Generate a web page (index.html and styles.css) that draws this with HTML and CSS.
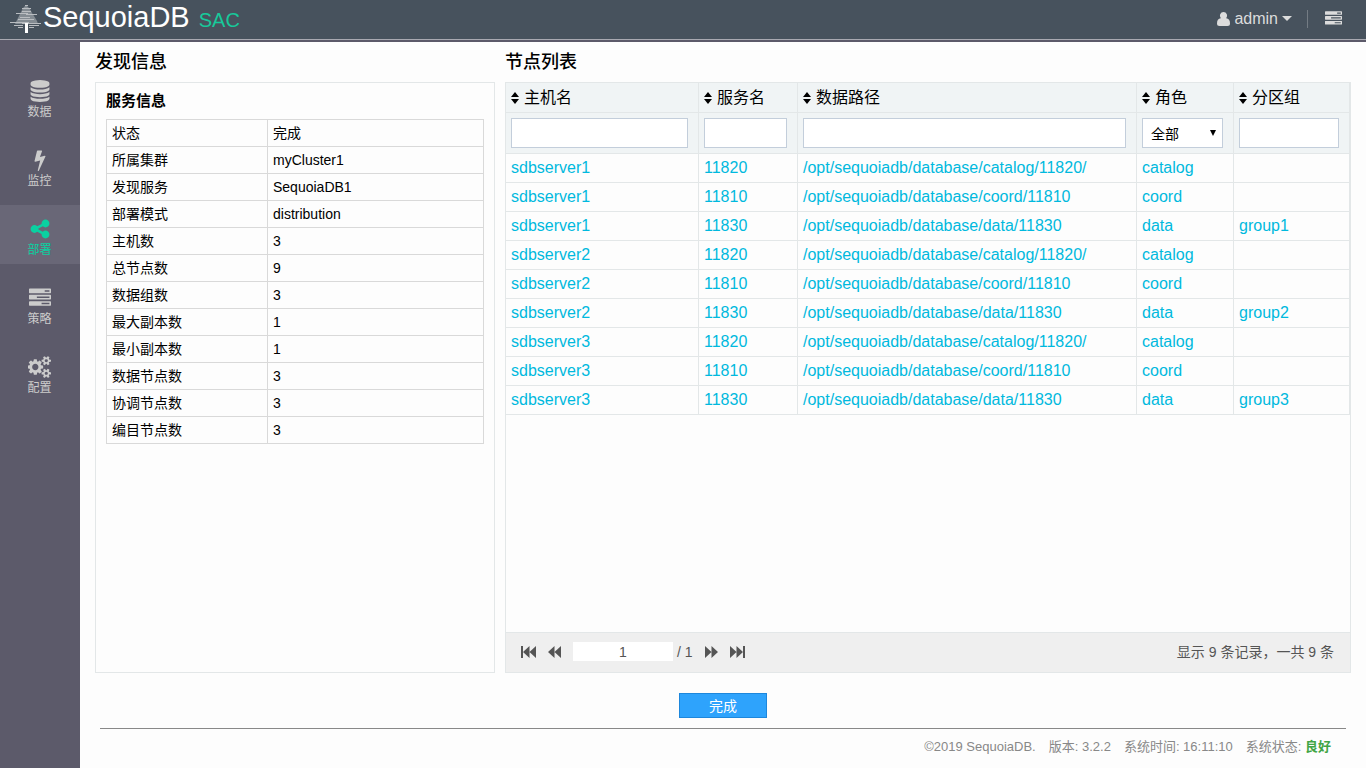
FILE: index.html
```html
<!DOCTYPE html>
<html lang="zh-CN">
<head>
<meta charset="utf-8">
<title>SequoiaDB SAC</title>
<link rel="stylesheet" href="styles.css">
</head>
<body>
<svg class="defs" aria-hidden="true">
  <symbol id="i-tasks" viewBox="0 0 1792 1792"><path d="M1024 1408h640v-128h-640v128zm-384-512h1024v-128h-1024v128zm640-512h384v-128h-384v128zm512 832v256q0 26-19 45t-45 19h-1664q-26 0-45-19t-19-45v-256q0-26 19-45t45-19h1664q26 0 45 19t19 45zm0-512v256q0 26-19 45t-45 19h-1664q-26 0-45-19t-19-45v-256q0-26 19-45t45-19h1664q26 0 45 19t19 45zm0-512v256q0 26-19 45t-45 19h-1664q-26 0-45-19t-19-45v-256q0-26 19-45t45-19h1664q26 0 45 19t19 45z"/></symbol>
  <symbol id="i-sort" viewBox="0 0 8 12"><path d="M4 0L8 5H0zM4 12L0 7H8z"/></symbol>
  <symbol id="i-double" viewBox="0 0 13 12"><path d="M6.500 0v12L0 6zM13 0v12L6.500 6z"/></symbol>
  <symbol id="i-end" viewBox="0 0 15 12"><path d="M0 0h2v12H0zM8.500 0v12L2 6zM15 0v12L8.500 6z"/></symbol>
</svg>

<header class="topbar">
  <a class="brand" href="#">
    <svg class="brand-tree" viewBox="0 0 32 30" aria-hidden="true">
      <path class="crown" d="M16 1L20 5L22 9L24 12L27 17L28 20H5L7 16L9 12L11 8L13 4z"/>
      <path class="boughs" d="M15 1.500h3M12 4.500h9M12 7.500h9M6 9.500h12M16 10.500h11M10 13.500h10M8 15.500h16M0 18.500h19M12 19.500h19M4 21.500h9M19 21.500h10M8 23.500h5M19 23.500h5"/>
      <path class="trunk" d="M15 19h3v10h-3z"/>
    </svg>
    <span class="brand-name">SequoiaDB</span>
    <span class="brand-sub">SAC</span>
  </a>
  <div class="tools">
    <button class="tool user" type="button">
      <svg width="13" height="14" viewBox="0 0 13 14" aria-hidden="true"><path d="M6.500 0a3.800 3.800 0 0 1 2.700 6.300Q13 6.500 13 11.500Q13 14 10.500 14h-8Q0 14 0 11.500Q0 6.500 3.800 6.300A3.800 3.800 0 0 1 6.500 0z"/></svg>
      <span>admin</span>
      <svg width="10" height="5" viewBox="0 0 10 5" aria-hidden="true"><path d="M0 0h10L5 5z"/></svg>
    </button>
    <button class="tool menu" type="button" aria-label="任务">
      <svg width="17" height="17" aria-hidden="true"><use href="#i-tasks"/></svg>
    </button>
  </div>
</header>

<div class="shell">
  <nav class="sidebar">
    <a class="nav-item" href="#">
      <svg class="nav-icon" viewBox="0 0 1792 1792" aria-hidden="true"><path d="M896 768q237 0 443-43t325-127v170q0 69-103 128t-280 93.500-385 34.500-385-34.500-280-93.500-103-128v-170q119 84 325 127t443 43zm0 768q237 0 443-43t325-127v170q0 69-103 128t-280 93.500-385 34.500-385-34.500-280-93.500-103-128v-170q119 84 325 127t443 43zm0-384q237 0 443-43t325-127v170q0 69-103 128t-280 93.500-385 34.500-385-34.500-280-93.500-103-128v-170q119 84 325 127t443 43zm0-1152q208 0 385 34.500t280 93.500 103 128v128q0 69-103 128t-280 93.500-385 34.500-385-34.500-280-93.500-103-128v-128q0-69 103-128t280-93.500 385-34.500z"/></svg>
      <span>数据</span>
    </a>
    <a class="nav-item" href="#">
      <svg class="nav-icon" viewBox="0 0 1792 1792" aria-hidden="true"><path d="M1333 566q18 20 7 44l-540 1157q-13 25-42 25-4 0-14-2-17-5-25.500-19t-4.500-30l197-808-406 101q-4 1-12 1-18 0-31-11-18-15-13-39l201-825q4-14 16-23t28-9h328q19 0 32 12.500t13 29.500q0 8-5 18l-171 463 396-98q8-2 12-2 19 0 34 15z"/></svg>
      <span>监控</span>
    </a>
    <a class="nav-item active" href="#" aria-current="page">
      <svg class="nav-icon" viewBox="0 0 1792 1792" aria-hidden="true"><path d="M1344 1024q133 0 226.500 93.500t93.500 226.500-93.500 226.500-226.500 93.500-226.500-93.500-93.500-226.500q0-12 2-34l-360-180q-92 86-218 86-133 0-226.500-93.500t-93.500-226.500 93.500-226.500 226.500-93.500q126 0 218 86l360-180q-2-22-2-34 0-133 93.500-226.500t226.500-93.500 226.500 93.500 93.500 226.500-93.500 226.500-226.500 93.500q-126 0-218-86l-360 180q2 22 2 34t-2 34l360 180q92-86 218-86z"/></svg>
      <span>部署</span>
    </a>
    <a class="nav-item" href="#">
      <svg class="nav-icon" aria-hidden="true"><use href="#i-tasks"/></svg>
      <span>策略</span>
    </a>
    <a class="nav-item" href="#">
      <svg class="nav-icon wide" viewBox="0 0 1920 1792" aria-hidden="true"><path d="M832 896q0-106-75-181t-181-75-181 75-75 181 75 181 181 75 181-75 75-181zm768 512q0-52-38-90t-90-38-90 38-38 90q0 53 37.500 90.500t90.500 37.500 90.500-37.500 37.500-90.500zm0-1024q0-52-38-90t-90-38-90 38-38 90q0 53 37.500 90.500t90.500 37.500 90.500-37.500 37.500-90.500zm-384 421v185q0 10-7 19.500t-16 10.500l-155 24q-11 35-32 76 34 48 90 115 7 11 7 20 0 12-7 19-23 30-82.500 89.500t-78.500 59.500q-11 0-21-7l-115-90q-37 19-77 31-11 108-23 155-7 24-30 24h-186q-11 0-20-7.500t-10-17.500l-23-153q-34-10-75-31l-118 89q-7 7-20 7-11 0-21-8-144-133-144-160 0-9 7-19 10-14 41-53t47-61q-23-44-35-82l-152-24q-10-1-17-9.500t-7-19.500v-185q0-10 7-19.500t16-10.500l155-24q11-35 32-76-34-48-90-115-7-11-7-20 0-12 7-20 22-30 82-89t79-59q11 0 21 7l115 90q34-18 77-32 11-108 23-154 7-24 30-24h186q11 0 20 7.500t10 17.500l23 153q34 10 75 31l118-89q8-7 20-7 11 0 21 8 144 133 144 160 0 8-7 19-12 16-42 54t-45 60q23 48 34 82l152 23q10 2 17 10.500t7 19.500zm640 533v140q0 16-149 31-12 27-30 52 51 113 51 138 0 4-4 7-122 71-124 71-8 0-46-47t-52-68q-20 2-30 2t-30-2q-14 21-52 68t-46 47q-2 0-124-71-4-3-4-7 0-25 51-138-18-25-30-52-149-15-149-31v-140q0-16 149-31 13-29 30-52-51-113-51-138 0-4 4-7 4-2 35-20t59-34 30-16q8 0 46 46.500t52 67.500q20-2 30-2t30 2q51-71 92-112l6-2q4 0 124 70 4 3 4 7 0 25-51 138 17 23 30 52 149 15 149 31zm0-1024v140q0 16-149 31-12 27-30 52 51 113 51 138 0 4-4 7-122 71-124 71-8 0-46-47t-52-68q-20 2-30 2t-30-2q-14 21-52 68t-46 47q-2 0-124-71-4-3-4-7 0-25 51-138-18-25-30-52-149-15-149-31v-140q0-16 149-31 13-29 30-52-51-113-51-138 0-4 4-7 4-2 35-20t59-34 30-16q8 0 46 46.500t52 67.500q20-2 30-2t30 2q51-71 92-112l6-2q4 0 124 70 4 3 4 7 0 25-51 138 17 23 30 52 149 15 149 31z"/></svg>
      <span>配置</span>
    </a>
  </nav>

  <main class="main">
    <div class="columns">
      <section class="column">
        <h1 class="title">发现信息</h1>
        <div class="panel info">
          <h2 class="subtitle">服务信息</h2>
          <table class="info-table">
            <tbody>
              <tr><th scope="row">状态</th><td>完成</td></tr>
              <tr><th scope="row">所属集群</th><td>myCluster1</td></tr>
              <tr><th scope="row">发现服务</th><td>SequoiaDB1</td></tr>
              <tr><th scope="row">部署模式</th><td>distribution</td></tr>
              <tr><th scope="row">主机数</th><td>3</td></tr>
              <tr><th scope="row">总节点数</th><td>9</td></tr>
              <tr><th scope="row">数据组数</th><td>3</td></tr>
              <tr><th scope="row">最大副本数</th><td>1</td></tr>
              <tr><th scope="row">最小副本数</th><td>1</td></tr>
              <tr><th scope="row">数据节点数</th><td>3</td></tr>
              <tr><th scope="row">协调节点数</th><td>3</td></tr>
              <tr><th scope="row">编目节点数</th><td>3</td></tr>
            </tbody>
          </table>
        </div>
      </section>

      <section class="column">
        <h1 class="title">节点列表</h1>
        <div class="panel nodes">
          <table class="node-table">
            <colgroup><col class="c-host"><col class="c-service"><col><col class="c-role"><col class="c-group"></colgroup>
            <thead>
              <tr class="heads">
                <th scope="col"><button type="button" class="sort"><svg width="8" height="12" aria-hidden="true"><use href="#i-sort"/></svg>主机名</button></th>
                <th scope="col"><button type="button" class="sort"><svg width="8" height="12" aria-hidden="true"><use href="#i-sort"/></svg>服务名</button></th>
                <th scope="col"><button type="button" class="sort"><svg width="8" height="12" aria-hidden="true"><use href="#i-sort"/></svg>数据路径</button></th>
                <th scope="col"><button type="button" class="sort"><svg width="8" height="12" aria-hidden="true"><use href="#i-sort"/></svg>角色</button></th>
                <th scope="col"><button type="button" class="sort"><svg width="8" height="12" aria-hidden="true"><use href="#i-sort"/></svg>分区组</button></th>
              </tr>
              <tr class="filters">
                <td><input class="field" type="text" aria-label="主机名"></td>
                <td><input class="field" type="text" aria-label="服务名"></td>
                <td><input class="field" type="text" aria-label="数据路径"></td>
                <td><div class="select"><select class="field" aria-label="角色"><option>全部</option><option>catalog</option><option>coord</option><option>data</option></select></div></td>
                <td><input class="field" type="text" aria-label="分区组"></td>
              </tr>
            </thead>
            <tbody>
              <tr><td>sdbserver1</td><td>11820</td><td>/opt/sequoiadb/database/catalog/11820/</td><td>catalog</td><td></td></tr>
              <tr><td>sdbserver1</td><td>11810</td><td>/opt/sequoiadb/database/coord/11810</td><td>coord</td><td></td></tr>
              <tr><td>sdbserver1</td><td>11830</td><td>/opt/sequoiadb/database/data/11830</td><td>data</td><td>group1</td></tr>
              <tr><td>sdbserver2</td><td>11820</td><td>/opt/sequoiadb/database/catalog/11820/</td><td>catalog</td><td></td></tr>
              <tr><td>sdbserver2</td><td>11810</td><td>/opt/sequoiadb/database/coord/11810</td><td>coord</td><td></td></tr>
              <tr><td>sdbserver2</td><td>11830</td><td>/opt/sequoiadb/database/data/11830</td><td>data</td><td>group2</td></tr>
              <tr><td>sdbserver3</td><td>11820</td><td>/opt/sequoiadb/database/catalog/11820/</td><td>catalog</td><td></td></tr>
              <tr><td>sdbserver3</td><td>11810</td><td>/opt/sequoiadb/database/coord/11810</td><td>coord</td><td></td></tr>
              <tr><td>sdbserver3</td><td>11830</td><td>/opt/sequoiadb/database/data/11830</td><td>data</td><td>group3</td></tr>
            </tbody>
          </table>
          <div class="pager">
            <button type="button" class="page-btn" aria-label="首页"><svg width="15" height="12" aria-hidden="true"><use href="#i-end"/></svg></button>
            <button type="button" class="page-btn" aria-label="上一页"><svg width="13" height="12" aria-hidden="true"><use href="#i-double"/></svg></button>
            <div class="page-pos"><input class="page-input" type="text" value="1" aria-label="页码"><span>/ 1</span></div>
            <button type="button" class="page-btn flip" aria-label="下一页"><svg width="13" height="12" aria-hidden="true"><use href="#i-double"/></svg></button>
            <button type="button" class="page-btn flip" aria-label="末页"><svg width="15" height="12" aria-hidden="true"><use href="#i-end"/></svg></button>
            <span class="page-total">显示 9 条记录，一共 9 条</span>
          </div>
        </div>
      </section>
    </div>

    <div class="actions"><button type="button" class="primary">完成</button></div>

    <footer class="footer">
      <span>©2019 SequoiaDB.</span>
      <span>版本: 3.2.2</span>
      <span>系统时间: 16:11:10</span>
      <span>系统状态: <strong class="ok">良好</strong></span>
    </footer>
  </main>
</div>
</body>
</html>
```

FILE: styles.css
```css
*, *::before, *::after { box-sizing: border-box; }

body {
  margin: 0;
  min-height: 100vh;
  display: flex;
  flex-direction: column;
  background: #fdfdfd;
  color: #000;
  font: 14px/20px "Liberation Sans", Arial, "Noto Sans CJK SC", sans-serif;
}

button, input, select { font: inherit; color: inherit; margin: 0; }
button { border: 0; padding: 0; background: none; cursor: pointer; }
svg { display: block; fill: currentColor; }
.defs { position: absolute; width: 0; height: 0; }

/* Top bar */
.topbar {
  display: flex;
  justify-content: space-between;
  height: 40px;
  padding: 0 24px 0 10px;
  background: #47525d;
  border-bottom: 1px solid #a9a9b1;
}
.brand {
  display: flex;
  align-items: baseline;
  color: #fff;
  text-decoration: none;
}
.brand-tree { width: 32px; height: 30px; margin-top: 4px; align-self: flex-start; }
.crown { fill: #848c93; }
.boughs { fill: none; stroke: #b9bdc1; stroke-width: 1; }
.brand-name { font-size: 29px; line-height: 34px; margin-left: 1px; }
.brand-sub { font-size: 20px; line-height: 34px; margin-left: 9px; color: #17c99a; }
.tools { display: flex; align-items: center; color: #dcdcdc; padding-bottom: 2px; }
.tool { display: flex; align-items: center; height: 18px; font-size: 16px; }
.user { gap: 4px; padding-right: 15px; border-right: 1px solid #747c84; }
.menu { padding-left: 17px; }

/* Side navigation */
.shell { flex: 1; display: flex; }
.sidebar {
  width: 80px;
  display: flex;
  flex-direction: column;
  gap: 10px;
  padding-top: 27px;
  background: #5c5a6a;
}
.nav-item {
  display: flex;
  flex-direction: column;
  align-items: center;
  height: 59px;
  padding: 13px 1px 0 0;
  color: #ccc;
  font-size: 12px;
  line-height: 20px;
  text-decoration: none;
}
.nav-item.active { background: #696777; color: #0ad1a1; }
.nav-icon { width: 22px; height: 22px; }
.nav-icon.wide { width: 24px; }

/* Content */
.main {
  flex: 1;
  display: flex;
  flex-direction: column;
  padding: 0 15px;
  border-top: 2px solid #5c5a6a;
}
.columns {
  flex: 1;
  display: grid;
  grid-template-columns: 400px 1fr;
  gap: 10px;
}
.column { display: flex; flex-direction: column; }
.title { margin: 0; font-size: 18px; font-weight: 500; line-height: 40px; }
.panel { flex: 1; border: 1px solid #e3e7e8; }

.info { padding: 8px 10px; }
.subtitle { margin: 0 0 8px; font-size: 15px; font-weight: 700; line-height: 20px; }
.info-table { width: 100%; border-collapse: collapse; }
.info-table th, .info-table td {
  height: 27px;
  padding: 0 5px;
  border: 1px solid #d9d9d9;
  font-weight: 400;
  text-align: left;
}
.info-table th { width: 161px; }

.nodes { display: flex; flex-direction: column; }
.node-table { width: 100%; table-layout: fixed; border-collapse: separate; border-spacing: 0; font-size: 16px; }
.c-host { width: 193px; }
.c-service { width: 99px; }
.c-role { width: 97px; }
.c-group { width: 116px; }
.node-table th, .node-table td {
  padding: 0 5px;
  height: 29px;
  border: 0 solid #e3e7e8;
  border-width: 0 1px 1px 0;
  text-align: left;
  font-weight: 400;
}
.node-table tbody { color: #00b9de; }
.node-table thead { background: #f0f4f5; }
.node-table .heads th { height: 30px; }
.sort { display: flex; align-items: center; gap: 5px; }
.node-table .filters td { height: 41px; padding-right: 10px; }
.field {
  display: block;
  width: 100%;
  height: 30px;
  padding: 0 8px;
  border: 1px solid #c3cedb;
  border-radius: 0;
  background: #fff;
  font-size: 14px;
}
.select { position: relative; }
.select .field { appearance: none; padding-top: 2px; color: #000; }
.select::after {
  content: "";
  position: absolute;
  right: 7px;
  top: 12px;
  border: 3px solid transparent;
  border-top: 6px solid #000;
  border-bottom: 0;
  pointer-events: none;
}

.pager {
  display: flex;
  align-items: center;
  gap: 12px;
  height: 40px;
  margin-top: auto;
  padding: 0 16px 2px 15px;
  background: #efefef;
  border-top: 1px solid #e3e7e8;
  color: #555;
}
.page-pos { display: flex; align-items: center; gap: 4px; }
.page-input { width: 100px; height: 19px; padding: 0; border: 0; background: #fff; text-align: center; }
.flip svg { transform: scaleX(-1); }
.page-total { margin-left: auto; }

.actions { display: flex; justify-content: center; padding: 20px 0 10px; }
.primary {
  width: 88px;
  height: 25px;
  border: 1px solid #1d87dc;
  background: #2ea3fc;
  color: #fff;
}

.footer {
  display: flex;
  justify-content: flex-end;
  gap: 13px;
  height: 40px;
  margin: 0 5px;
  padding: 8px 15px 0 0;
  border-top: 1px solid #888;
  color: #888;
  font-size: 13px;
}
.ok { color: #41a545; }
```
